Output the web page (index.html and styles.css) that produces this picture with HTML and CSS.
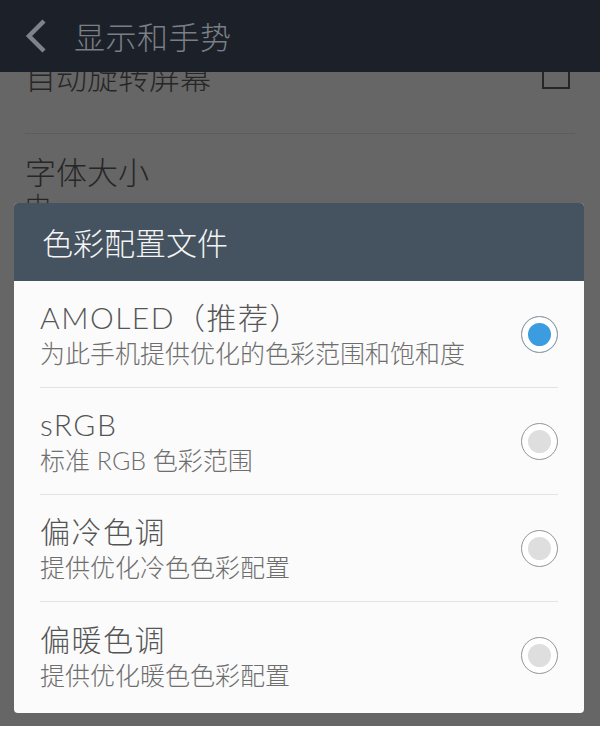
FILE: index.html
```html
<!DOCTYPE html>
<html lang="zh-CN">

<head>
    <meta charset="utf-8">
    <meta name="viewport" content="width=device-width, initial-scale=1.0">
    <title>显示和手势</title>
    <link rel="stylesheet" href="styles.css">
</head>

<body>
    <div id="skaerm">
        <header>
            <svg class="tilbage" width="24" height="36" viewBox="0 0 24 36">
                <polyline points="20,3 5,18 20,33" fill="none" stroke="#7e838a" stroke-width="4.5" />
            </svg>
            <h1>显示和手势</h1>
        </header>

        <div id="indstillinger">
            <div class="liste">
                <div class="raekke">
                    <span>自动旋转屏幕</span>
                    <span class="boks"></span>
                </div>
                <div class="raekke dobbelt">
                    <span>字体大小</span>
                    <span class="under">中</span>
                </div>
            </div>
        </div>

        <!-- dialog ligger oven over listen -->
        <div id="dialog">
            <div class="dialog-top">
                <h2>色彩配置文件</h2>
            </div>
            <div class="valg">
                <div class="tekst">
                    <p class="titel">AMOLED（推荐）</p>
                    <p class="beskrivelse">为此手机提供优化的色彩范围和饱和度</p>
                </div>
                <span class="radio valgt"></span>
            </div>
            <div class="valg">
                <div class="tekst">
                    <p class="titel">sRGB</p>
                    <p class="beskrivelse">标准 RGB 色彩范围</p>
                </div>
                <span class="radio"></span>
            </div>
            <div class="valg">
                <div class="tekst">
                    <p class="titel">偏冷色调</p>
                    <p class="beskrivelse">提供优化冷色色彩配置</p>
                </div>
                <span class="radio"></span>
            </div>
            <div class="valg">
                <div class="tekst">
                    <p class="titel">偏暖色调</p>
                    <p class="beskrivelse">提供优化暖色色彩配置</p>
                </div>
                <span class="radio"></span>
            </div>
        </div>
    </div>
</body>

</html>
```

FILE: styles.css
```css
body {
    margin: 0;
    background-color: white;
    font-family: "Lato", "Noto Sans CJK SC", sans-serif;
    font-weight: 300;
}

p,
h1,
h2 {
    margin: 0;
    font-weight: 300;
}

#skaerm {
    position: relative;
    height: 726px;
    background-color: #666666;
    overflow: hidden;
}

header {
    position: relative;
    z-index: 1;
    height: 71px;
    background-color: #1c2129;
    display: flex;
    align-items: center;
    padding-left: 24px;
    padding-bottom: 1px;
}

.tilbage {
    margin-right: 26px;
}

h1 {
    font-size: 31px;
    color: #7a7f86;
    letter-spacing: 0.5px;
}

#indstillinger {
    height: 655px;
    overflow: hidden;
}

/* listen er scrollet lidt op under toppen */
.liste {
    margin-top: -55px;
}

.raekke {
    display: flex;
    justify-content: space-between;
    align-items: center;
    margin: 0 25px 0 25px;
    padding-right: 5px;
    height: 116px;
    border-bottom: 1px solid #5c5c5c;
    font-size: 31px;
    color: #262626;
}

.boks {
    width: 24px;
    height: 24px;
    border: 2px solid #262626;
}

.dobbelt {
    flex-direction: column;
    align-items: flex-start;
    justify-content: flex-start;
    padding-top: 20px;
    line-height: 36px;
    border: none;
}

.under {
    font-size: 26px;
    line-height: 32px;
}

#dialog {
    position: absolute;
    top: 203px;
    left: 14px;
    width: 570px;
    padding-bottom: 4px;
    border-radius: 4px;
    background-color: #fbfbfb;
    overflow: hidden;
}

.dialog-top {
    height: 78px;
    background-color: #44535f;
    display: flex;
    align-items: center;
    padding-left: 28px;
    padding-bottom: 1px;
    box-sizing: border-box;
}

h2 {
    font-size: 31px;
    color: #f4f4f4;
}

.valg {
    display: flex;
    align-items: center;
    justify-content: space-between;
    height: 107px;
    margin: 0 26px 0 26px;
    border-bottom: 1px solid #e3e3e3;
    box-sizing: border-box;
}

.valg:last-child {
    border-bottom: none;
}

.titel {
    font-size: 30px;
    line-height: 38px;
    letter-spacing: 1.5px;
    color: #555555;
}

.beskrivelse {
    font-size: 25px;
    line-height: 34px;
    color: #6e6e6e;
}

/* ring med hvid kant og prik i midten */
.radio {
    width: 35px;
    height: 35px;
    border: 1.5px solid #9a9a9a;
    border-radius: 50%;
    background-color: #dedede;
    box-shadow: inset 0 0 0 6px white;
}

.radio.valgt {
    background-color: #3b9ddf;
}
```
